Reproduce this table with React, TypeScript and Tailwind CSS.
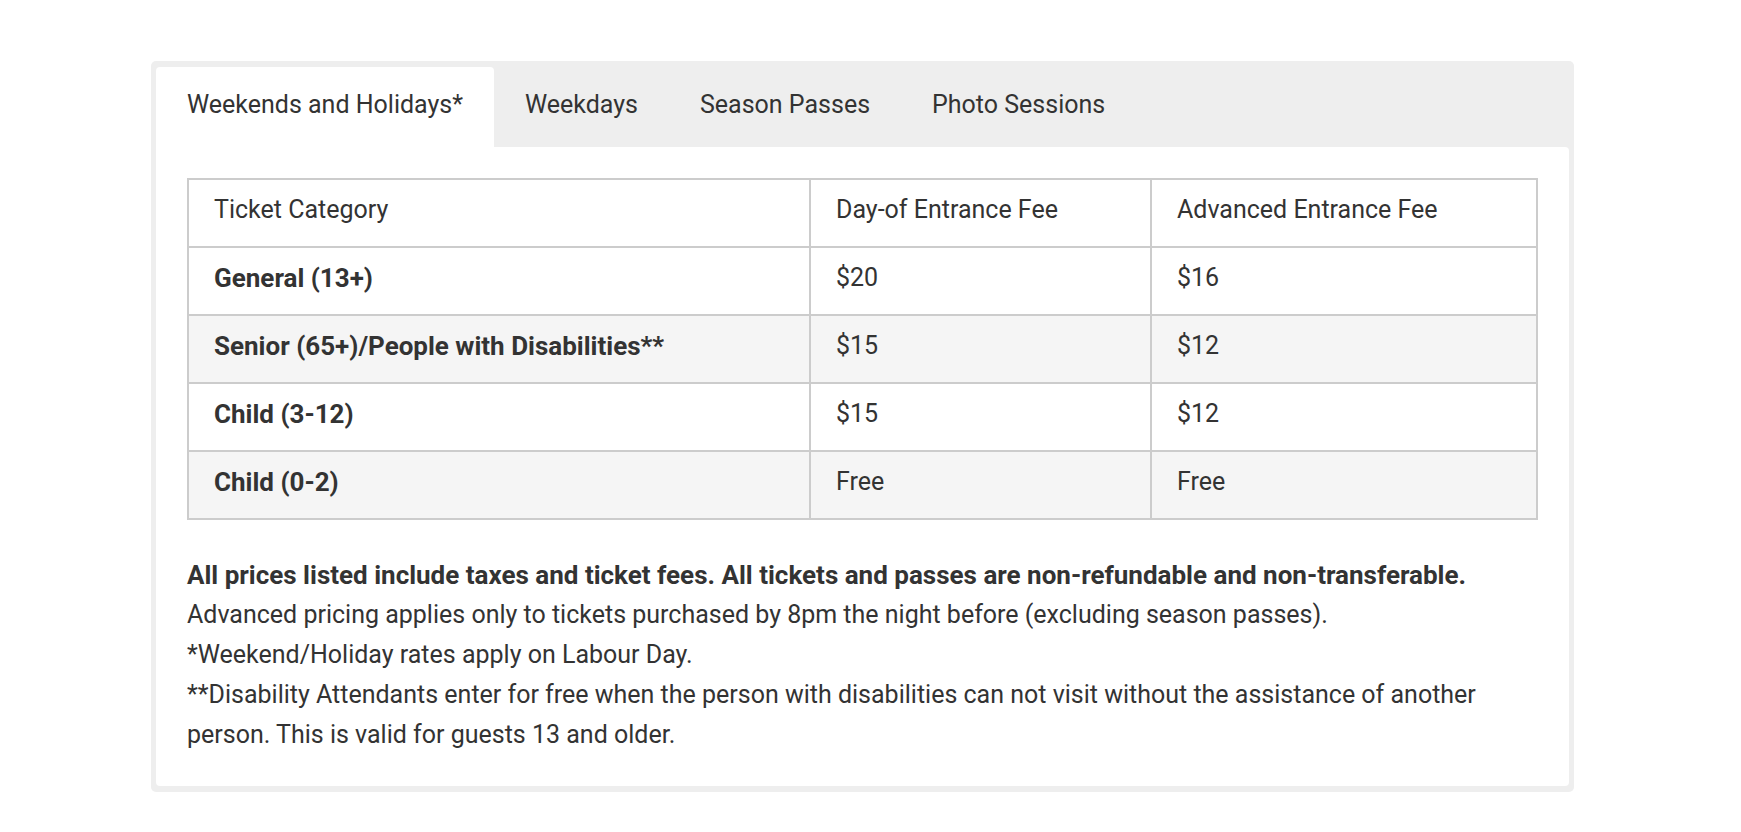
const tabs = ['Weekends and Holidays*', 'Weekdays', 'Season Passes', 'Photo Sessions'];

type Row = { category: string; dayOf: string; advanced: string };

const rows: Row[] = [
  { category: 'General (13+)', dayOf: '$20', advanced: '$16' },
  { category: 'Senior (65+)/People with Disabilities**', dayOf: '$15', advanced: '$12' },
  { category: 'Child (3-12)', dayOf: '$15', advanced: '$12' },
  { category: 'Child (0-2)', dayOf: 'Free', advanced: 'Free' },
];

export default function App() {
  return (
    <div className="min-h-screen bg-white pt-[61px] pl-[151px] font-['Roboto',sans-serif] text-[#333333]">
      <div className="w-[1423px] rounded-[5px] bg-[#eeeeee] p-[5px] pt-[6px] pb-[6px]">
        <div className="flex">
          {tabs.map((tab, i) => (
            <button
              key={tab}
              className={
                i === 0
                  ? 'h-[80px] rounded-t-[4px] bg-white px-[31px] pb-[4px] text-[25px]'
                  : 'h-[80px] px-[31px] pb-[4px] text-[25px]'
              }
            >
              {tab}
            </button>
          ))}
        </div>

        <div className="rounded-b-[4px] rounded-tr-[4px] bg-white p-[31px] pb-[31px]">
          <table className="w-full table-fixed border-collapse border-2 border-[#cccccc] text-[25px]">
            <colgroup>
              <col className="w-[622px]" />
              <col className="w-[341px]" />
              <col />
            </colgroup>
            <thead>
              <tr className="h-[68px]">
                <th className="border-2 border-[#cccccc] px-[25px] pb-[6px] text-left font-normal">Ticket Category</th>
                <th className="border-2 border-[#cccccc] px-[25px] pb-[6px] text-left font-normal">Day-of Entrance Fee</th>
                <th className="border-2 border-[#cccccc] px-[25px] pb-[6px] text-left font-normal">Advanced Entrance Fee</th>
              </tr>
            </thead>
            <tbody>
              {rows.map((row, i) => (
                <tr key={row.category} className={i % 2 === 1 ? 'h-[68px] bg-[#f5f5f5]' : 'h-[68px]'}>
                  <td className="border-2 border-[#cccccc] px-[25px] pb-[6px] text-[26px] font-bold">{row.category}</td>
                  <td className="border-2 border-[#cccccc] px-[25px] pb-[6px]">{row.dayOf}</td>
                  <td className="border-2 border-[#cccccc] px-[25px] pb-[6px]">{row.advanced}</td>
                </tr>
              ))}
            </tbody>
          </table>

          <div className="mt-[35px] text-[25px] leading-[40px]">
            <p className="text-[26px] font-bold">
              All prices listed include taxes and ticket fees. All tickets and passes are non-refundable and non-transferable.
            </p>
            <p>Advanced pricing applies only to tickets purchased by 8pm the night before (excluding season passes).</p>
            <p>*Weekend/Holiday rates apply on Labour Day.</p>
            <p>
              **Disability Attendants enter for free when the person with disabilities can not visit without the assistance of another person. This is valid for guests 13 and older.
            </p>
          </div>
        </div>
      </div>
    </div>
  );
}
